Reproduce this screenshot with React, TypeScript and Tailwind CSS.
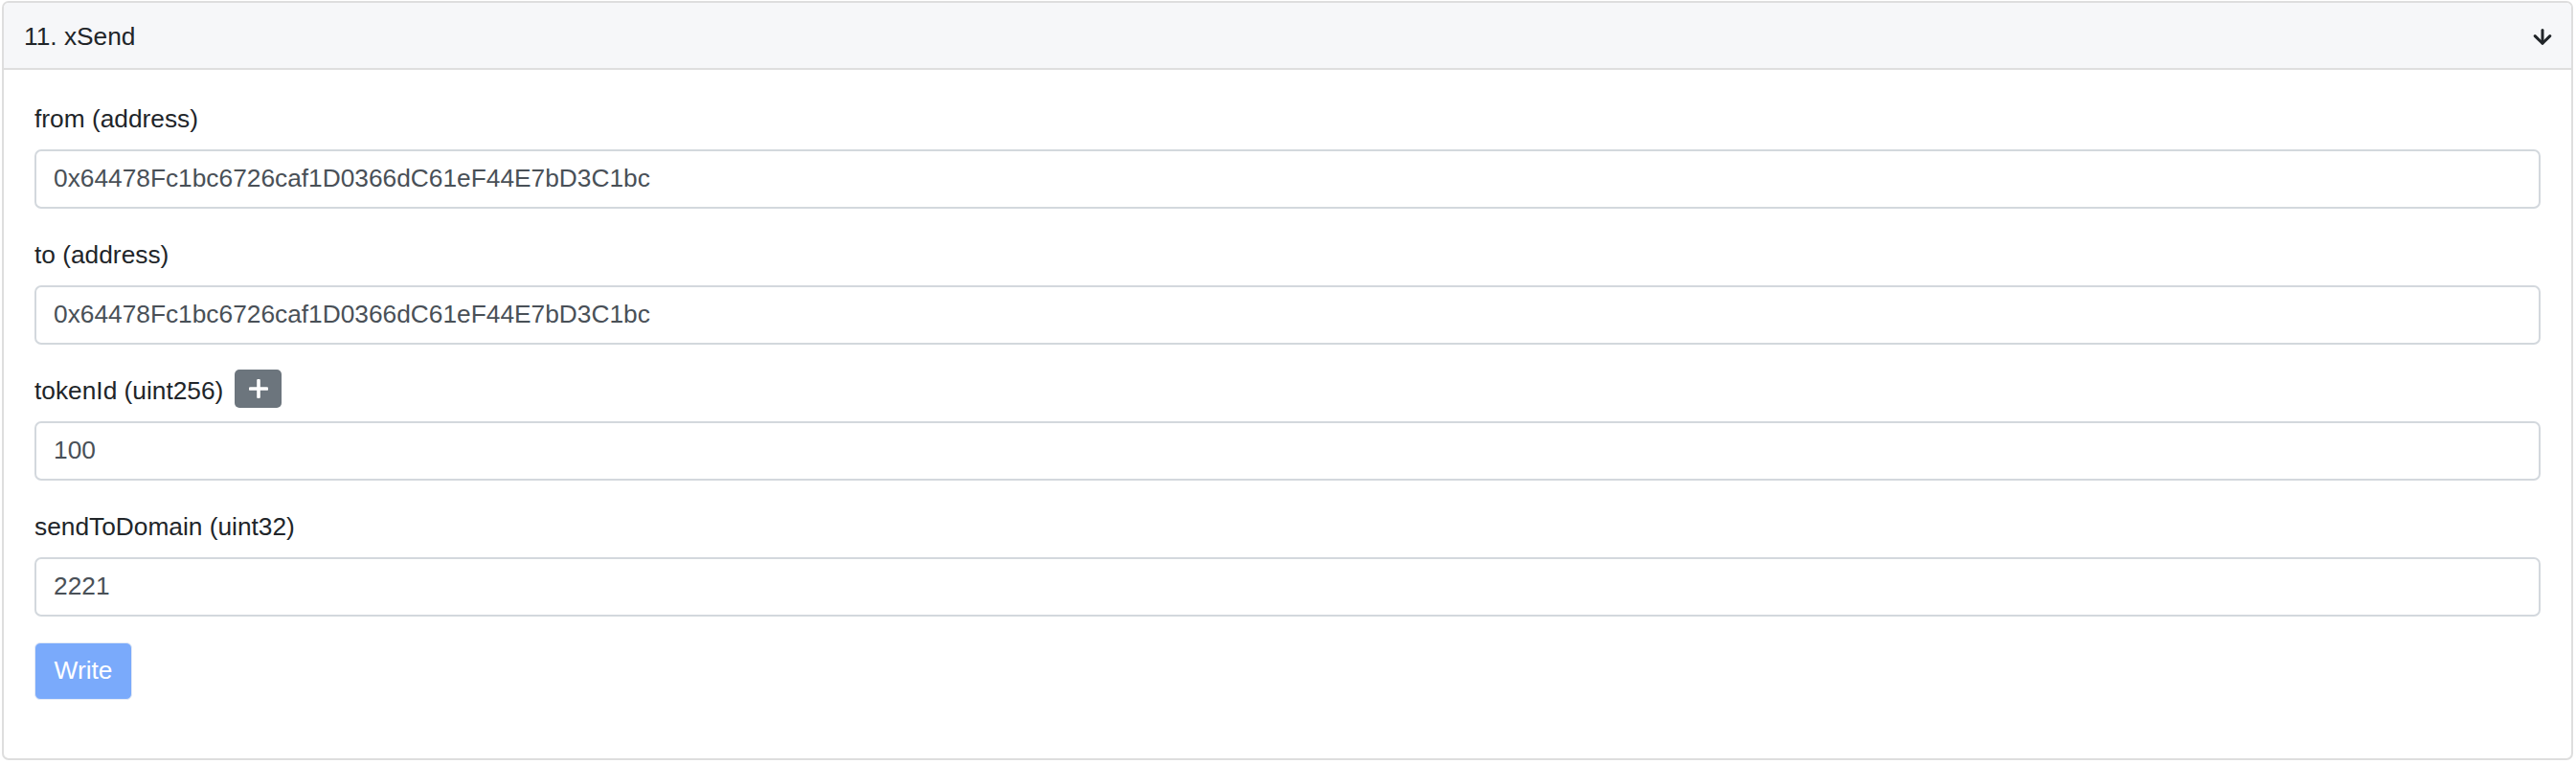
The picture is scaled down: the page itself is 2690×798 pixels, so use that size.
const FONT = "font-['Liberation_Sans',Arial,sans-serif]";

const ADDRESS = "0x64478Fc1bc6726caf1D0366dC61eF44E7bD3C1bc";

function ArrowDown() {
  return (
    <svg width="20" height="17" viewBox="0 0 20 17" fill="none" stroke="#212529" strokeWidth="3" strokeLinecap="round" strokeLinejoin="round">
      <path d="M10 1.5V15" />
      <path d="M2.2 7.6L10 15.2L17.8 7.6" />
    </svg>
  );
}

function PlusIcon() {
  return (
    <svg width="20" height="20" viewBox="0 0 20 20" fill="none" stroke="#ffffff" strokeWidth="3.6" strokeLinecap="round">
      <path d="M10 1.5V18.5" />
      <path d="M1.5 10H18.5" />
    </svg>
  );
}

function Field({ value }: { value: string }) {
  return (
    <div className="flex h-[62px] items-center rounded-[7px] border-2 border-[#d3d8dd] bg-white pl-[18px] text-[26.3px] text-[#495057]">
      {value}
    </div>
  );
}

export default function App() {
  const rows = [
    { label: "from (address)", value: ADDRESS },
    { label: "to (address)", value: ADDRESS },
    { label: "tokenId (uint256)", value: "100", plus: true },
    { label: "sendToDomain (uint32)", value: "2221" },
  ];

  return (
    <div className={`bg-white pt-[1px] pl-[2px] pr-[3px] ${FONT}`}>
      <div className="overflow-hidden rounded-[7px] border-2 border-[#dedede]">
        <div className="flex h-[70px] items-center justify-between border-b-2 border-[#dedede] bg-[#f6f7f9] pt-[3px] pl-[21px] pr-[20px]">
          <span className="text-[26.3px] leading-[39px] text-[#212529]">11. xSend</span>
          <ArrowDown />
        </div>

        <div className="px-[32px] pt-[32px] pb-[61px]">
          {rows.map((r) => (
            <div key={r.label} className="mb-[29px]">
              <div className="mb-[12px] flex h-[39px] items-center">
                <span className="text-[26.3px] leading-[39px] text-[#212529]">{r.label}</span>
                {r.plus && (
                  <button className="mb-[6px] ml-[12px] flex h-[40px] w-[49px] items-center justify-center rounded-[5px] bg-[#6c757d]">
                    <PlusIcon />
                  </button>
                )}
              </div>
              <Field value={r.value} />
            </div>
          ))}

          <button className="-mt-[2px] flex h-[60px] w-[102px] items-center justify-center rounded-[6px] border border-[#e3eaf6] bg-[#7aaafb] text-[26.3px] text-white">
            Write
          </button>
        </div>
      </div>
    </div>
  );
}
